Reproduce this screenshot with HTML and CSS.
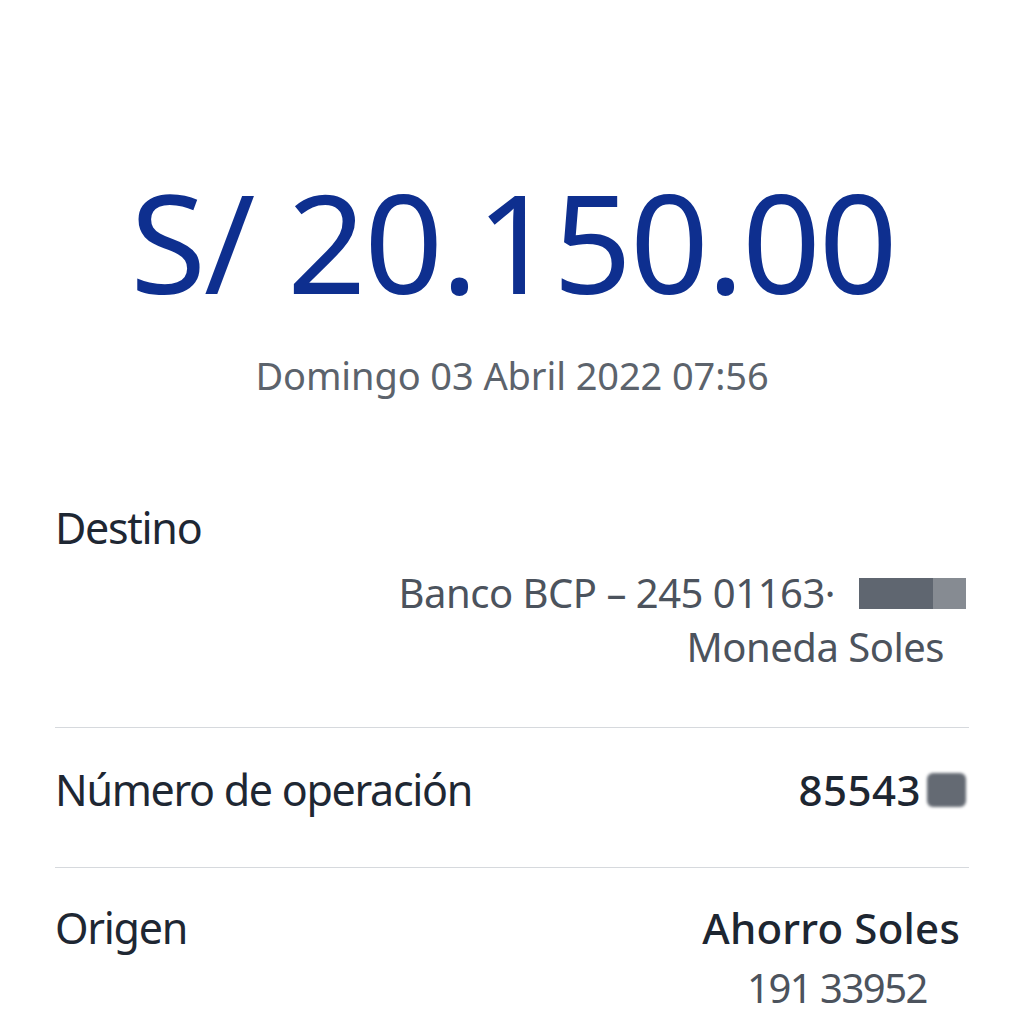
FILE: index.html
```html
<!DOCTYPE html>
<html lang="es">
<head>
<meta charset="utf-8">
<link rel="stylesheet" href="styles.css">
</head>
<body>
<main class="receipt">
  <section class="hero">
    <div class="amount">S/ 20.150.00</div>
    <div class="date">Domingo 03 Abril 2022 07:56</div>
  </section>

  <section class="row row-stack">
    <div class="label">Destino</div>
    <div class="values">
      <div class="value value-bank">Banco BCP – 245 01163·<span class="redact redact-wide"></span></div>
      <div class="value value-currency">Moneda Soles</div>
    </div>
  </section>

  <section class="row row-inline row-op">
    <div class="label">Número de operación</div>
    <div class="value-strong value-op">85543<span class="redact redact-small"></span></div>
  </section>

  <section class="row row-inline row-origin">
    <div class="label">Origen</div>
    <div class="value-col">
      <div class="value-strong value-account">Ahorro Soles</div>
      <div class="value value-number">191 33952</div>
    </div>
  </section>
</main>
</body>
</html>
```
FILE: styles.css
```css
* { box-sizing: border-box; }
html, body { margin: 0; padding: 0; background: #ffffff; }
body { font-family: "Noto Sans", "Open Sans", sans-serif; }

.receipt {
  width: 1024px;
  padding: 0 55px;
}

.hero {
  padding-top: 160px;
  display: flex;
  flex-direction: column;
  align-items: center;
}

.amount {
  font-size: 138px;
  line-height: 160px;
  letter-spacing: -2px;
  color: #0e2f8f;
  font-weight: 400;
  margin-left: 2px;
}

.date {
  margin-top: 31px;
  font-size: 38px;
  line-height: 48px;
  color: #5c636c;
  letter-spacing: -0.1px;
}

.label {
  font-size: 43px;
  line-height: 56px;
  letter-spacing: -1.3px;
  color: #1e2733;
}

.value {
  font-size: 40px;
  line-height: 54px;
  letter-spacing: -0.5px;
  color: #4c535d;
}

.value-strong {
  font-size: 42px;
  line-height: 56px;
  font-weight: 500;
  letter-spacing: -0.5px;
  color: #1d2631;
}

.row { border-bottom: 1px solid #d6d9dd; }

.row-stack {
  margin-top: 101px;
  padding-bottom: 53px;
}

.values {
  display: flex;
  flex-direction: column;
  align-items: flex-end;
  margin-top: 10px;
}

.value-bank {
  display: flex;
  align-items: center;
  padding-right: 3px;
}

.value-currency { padding-right: 25px; }

.row-inline {
  display: flex;
  justify-content: space-between;
  align-items: flex-start;
}

.row-op {
  padding-top: 34px;
  padding-bottom: 49px;
}

.value-op {
  display: flex;
  align-items: center;
  padding-right: 3px;
  letter-spacing: 0.5px;
}

.row-origin {
  padding-top: 32px;
  border-bottom: none;
}

.value-col {
  display: flex;
  flex-direction: column;
  align-items: flex-end;
}

.value-account { padding-right: 9px; letter-spacing: 0.2px; }

.value-number {
  margin-top: 5px;
  padding-right: 42px;
  letter-spacing: -1.5px;
}

.redact {
  display: inline-block;
  background: #676c75;
}

.redact-wide {
  width: 107px;
  height: 31px;
  margin-left: 24px;
  background: linear-gradient(90deg, #5f6670 0 69%, #868b92 69% 100%);
}

.redact-small {
  width: 39px;
  height: 34px;
  margin-left: 6px;
  border-radius: 6px;
  background: #646a73;
  filter: blur(1.5px);
}
```
